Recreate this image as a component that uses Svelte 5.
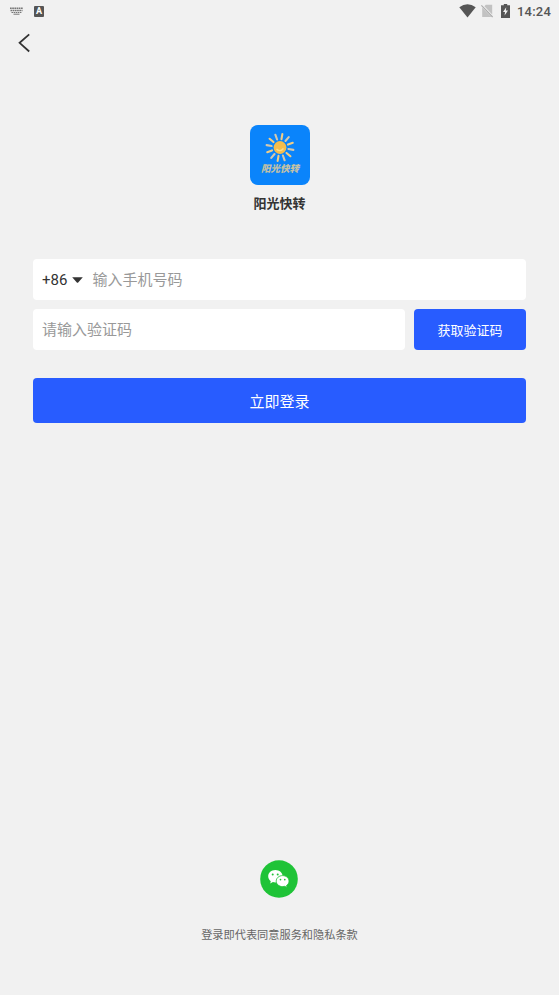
<script>
  let phone = "";
  let code = "";
  const areaCode = "+86";
  const rays = Array.from({ length: 12 }, (_, i) => i * 30);

  const getCode = () => {
    console.log("Send code to:", areaCode, phone);
  };

  const login = () => {
    console.log("Login:", phone, code);
  };
</script>

<main>
  <div class="status-bar">
    <div class="status-left">
      <svg width="13" height="8" viewBox="0 0 13 8" stroke="#777" fill="none">
        <path d="M0 1.2h13M0.5 3.5h12" stroke-width="1.4" stroke-dasharray="1.7 0.5" />
        <path d="M1.5 5.5h10" stroke-width="1.1" stroke-dasharray="1.5 0.6" />
        <path d="M3.5 7.2h6" />
      </svg>
      <span class="input-badge">A</span>
    </div>
    <div class="status-right">
      <svg class="wifi" width="17" height="14" viewBox="0 0 17 14">
        <path d="M0.3 3.2Q8.5 -2.6 16.7 3.2L8.5 13.5Z" fill="#555" />
      </svg>
      <svg class="sim" width="12" height="14" viewBox="0 0 12 14">
        <path d="M4.8 0.8h6.4v9.6L3.4 2.2Z" fill="#c2c2c2" />
        <path d="M1.2 3.4L10.4 13H1.2Z" fill="#c2c2c2" />
        <path d="M0.4 1.3L11.6 13" stroke="#aaa" stroke-width="1.1" />
      </svg>
      <svg class="battery" width="9" height="14" viewBox="0 0 9 14">
        <path d="M2.8 0h3.4v1.3H9V14H0V1.3h2.8Z" fill="#555" />
        <path d="M5.2 3.2L2 8h2l-.4 3.4L7 6.5H4.9Z" fill="#f1f1f1" />
      </svg>
      <span class="time">14:24</span>
    </div>
  </div>

  <div class="nav">
    <button class="back" aria-label="返回">
      <svg width="13" height="20" viewBox="0 0 13 20">
        <path d="M11.2 1.3L1.6 9.8l9.6 8.7" fill="none" stroke="#333" stroke-width="1.8" />
      </svg>
    </button>
  </div>

  <div class="brand">
    <svg class="logo" width="60" height="60" viewBox="0 0 60 60">
      <rect width="60" height="60" rx="8" fill="#0a84fb" />
      <g transform="translate(30 22.5)">
        {#each rays as angle}
          <path
            d="M0 -8.5L0 -13.6"
            transform="rotate({angle + 10})"
            stroke={angle % 60 === 0 ? "#f0cd86" : "#d3c8ae"}
            stroke-width="2.1"
            stroke-linecap="round"
          />
        {/each}
        <circle r="6.4" fill="#f5bd4c" />
        <path d="M-3.5 1.5Q0 5 3.5 1" fill="none" stroke="#fbdc88" stroke-width="1.4" />
      </g>
      <text class="logo-text" x="30" y="47" text-anchor="middle">阳光快转</text>
    </svg>
    <h1>阳光快转</h1>
  </div>

  <div class="form">
    <div class="field">
      <span class="area">{areaCode}</span>
      <svg class="caret" width="11" height="6" viewBox="0 0 11 6">
        <path d="M0.2 0.2h10.6L6.2 5.4q-.7.7-1.4 0Z" fill="#333" />
      </svg>
      <input type="tel" placeholder="输入手机号码" bind:value={phone} />
    </div>
    <div class="row">
      <div class="field">
        <input type="text" placeholder="请输入验证码" bind:value={code} />
      </div>
      <button class="code-btn" on:click={getCode}>获取验证码</button>
    </div>
    <button class="login-btn" on:click={login}>立即登录</button>
  </div>

  <div class="footer">
    <button class="wechat" aria-label="微信登录">
      <svg width="39" height="38" viewBox="0 0 39 38">
        <circle cx="19" cy="19" r="18.8" fill="#1fc337" />
        <path
          d="M15.4 10c-4.1 0-7.2 2.800-7.200 6.300 0 2 1 3.700 2.600 4.900l-.6 2.300 2.700-1.400c.8.3 1.600.4 2.500.4 4.100 0 7.200-2.700 7.200-6.200S19.500 10 15.400 10Z"
          fill="#fff"
        />
        <path
          d="M22.600 15.600c-3.600 0-6.400 2.400-6.400 5.500s2.800 5.500 6.400 5.500c.8 0 1.500-.1 2.200-.3l2.300 1.300-.6-2.100c1.600-1 2.500-2.600 2.500-4.400 0-3.100-2.800-5.500-6.400-5.500Z"
          fill="#fff"
          stroke="#1fc337"
          stroke-width="0.8"
        />
        <g fill="#1fc337">
          <circle cx="12.700" cy="14.500" r="1" />
          <circle cx="17.700" cy="14.500" r="1" />
          <circle cx="20.500" cy="19.600" r="0.850" />
          <circle cx="24.800" cy="19.600" r="0.850" />
        </g>
      </svg>
    </button>
    <p>登录即代表同意服务和隐私条款</p>
  </div>
</main>

<style>
  :global(body) {
    margin: 0;
    background: #f1f1f1;
  }

  main {
    display: flex;
    flex-direction: column;
    box-sizing: border-box;
    height: 995px;
    background: #f1f1f1;
    color: #333;
    font-family: Roboto, "Noto Sans CJK SC", sans-serif;
  }

  button {
    border: none;
    padding: 0;
    font-family: inherit;
    cursor: pointer;
  }

  svg {
    display: block;
  }

  .status-bar {
    display: flex;
    justify-content: space-between;
    height: 22px;
    padding: 0 8px 0 10px;
  }

  .status-left,
  .status-right {
    display: flex;
    align-items: center;
  }

  .input-badge {
    width: 10px;
    height: 11px;
    margin-left: 11px;
    border-radius: 1px;
    background: #555;
    color: #fff;
    font-size: 9px;
    font-weight: 700;
    line-height: 11px;
    text-align: center;
  }

  .sim {
    margin-left: 5px;
  }

  .battery {
    margin-left: 8px;
  }

  .time {
    margin-left: 7px;
    color: #555;
    font-size: 13px;
    font-weight: 500;
    letter-spacing: 0.2px;
  }

  .nav {
    display: flex;
    height: 41px;
    padding-left: 18px;
    align-items: center;
  }

  .back {
    background: none;
  }

  .brand {
    display: flex;
    flex-direction: column;
    align-items: center;
    margin-top: 62px;
  }

  .logo-text {
    fill: #c3c1a6;
    font-size: 9.5px;
    font-style: italic;
    font-weight: 900;
  }

  h1 {
    margin: 9px 0 0;
    font-size: 13px;
    font-weight: 700;
    line-height: 20px;
  }

  .form {
    display: flex;
    flex-direction: column;
    margin: 45px 33px 0;
  }

  .field {
    display: flex;
    align-items: center;
    box-sizing: border-box;
    flex: 1 0 auto;
    height: 41px;
    padding: 0 10px 0 9px;
    border-radius: 4px;
    background: #fff;
  }

  .area {
    font-size: 15px;
  }

  .caret {
    margin: 0 9px 0 5px;
  }

  input {
    flex: 1;
    min-width: 0;
    padding: 0;
    border: none;
    outline: none;
    background: none;
    color: #333;
    font-family: inherit;
    font-size: 15px;
  }

  input::placeholder {
    color: #999;
    opacity: 1;
  }

  .row {
    display: flex;
    gap: 9px;
    margin-top: 9px;
  }

  .code-btn {
    width: 112px;
    border-radius: 4px;
    background: #285cff;
    color: #fff;
    font-size: 13px;
  }

  .login-btn {
    height: 45px;
    margin-top: 28px;
    border-radius: 4px;
    background: #285cff;
    color: #fff;
    font-size: 15px;
  }

  .footer {
    display: flex;
    flex-direction: column;
    align-items: center;
    margin-top: auto;
    padding-bottom: 51px;
  }

  .wechat {
    border-radius: 50%;
    background: none;
  }

  p {
    margin: 30px 0 0;
    color: #666;
    font-size: 11.2px;
    line-height: 16px;
  }
</style>
